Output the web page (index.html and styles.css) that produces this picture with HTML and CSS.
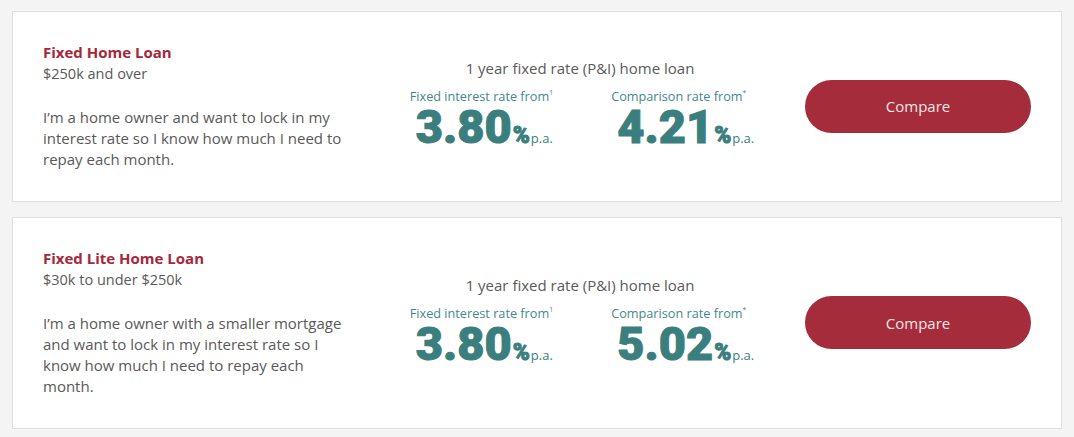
FILE: index.html
```html
<!DOCTYPE html>
<html lang="en">
<head>
  <meta charset="UTF-8" />
  <meta name="viewport" content="width=device-width, initial-scale=1" />
  <title>Fixed Home Loans</title>
  <link rel="stylesheet" href="styles.css">
</head>
<body>
  <main class="loan-list">
    <section class="loan-card">
      <div class="loan-info">
        <h2 class="loan-title">Fixed Home Loan</h2>
        <p class="loan-range">$250k and over</p>
        <p class="loan-desc">I’m a home owner and want to lock in my interest rate so I know how much I need to repay each month.</p>
      </div>

      <div class="loan-rates">
        <p class="rates-heading">1 year fixed rate (P&amp;I) home loan</p>
        <div class="rates-row">
          <div class="rate">
            <span class="rate-label">Fixed interest rate from<sup>1</sup></span>
            <span class="rate-value">3.80<span class="pct">%</span><span class="pa">p.a.</span></span>
          </div>
          <div class="rate">
            <span class="rate-label">Comparison rate from<sup>*</sup></span>
            <span class="rate-value">4.21<span class="pct">%</span><span class="pa">p.a.</span></span>
          </div>
        </div>
      </div>

      <a href="#" class="compare-btn">Compare</a>
    </section>

    <section class="loan-card">
      <div class="loan-info">
        <h2 class="loan-title">Fixed Lite Home Loan</h2>
        <p class="loan-range">$30k to under $250k</p>
        <p class="loan-desc">I’m a home owner with a smaller mortgage and want to lock in my interest rate so I know how much I need to repay each month.</p>
      </div>

      <div class="loan-rates">
        <p class="rates-heading">1 year fixed rate (P&amp;I) home loan</p>
        <div class="rates-row">
          <div class="rate">
            <span class="rate-label">Fixed interest rate from<sup>1</sup></span>
            <span class="rate-value">3.80<span class="pct">%</span><span class="pa">p.a.</span></span>
          </div>
          <div class="rate">
            <span class="rate-label">Comparison rate from<sup>*</sup></span>
            <span class="rate-value">5.02<span class="pct">%</span><span class="pa">p.a.</span></span>
          </div>
        </div>
      </div>

      <a href="#" class="compare-btn">Compare</a>
    </section>
  </main>
</body>
</html>
```

FILE: styles.css
```css
/* Reset */
* {
  box-sizing: border-box;
  margin: 0;
  padding: 0;
}

body {
  font-family: 'Open Sans', 'Liberation Sans', sans-serif;
  background: #f4f4f4;
  color: #595959;
  padding: 11px 12px 0 12px;
}

.loan-list {
  display: flex;
  flex-direction: column;
  gap: 15px;
}

/* Card */
.loan-card {
  background: white;
  border: 1px solid #dedede;
  padding: 30px 30px 31px 30px;
  display: flex;
  align-items: center;
}

.loan-info {
  width: 312px;
  flex: none;
  align-self: flex-start;
}

.loan-title {
  font-size: 15px;
  font-weight: 700;
  line-height: 21px;
  color: #a6273b;
}

.loan-range {
  font-size: 14.5px;
  line-height: 21px;
}

.loan-desc {
  max-width: 305px;
  font-size: 15px;
  line-height: 21px;
  margin-top: 23px;
}

/* Rates */
.loan-rates {
  flex: 1;
  display: flex;
  flex-direction: column;
  align-items: center;
  padding-top: 5px;
}

.rates-heading {
  font-size: 15px;
  line-height: 20px;
  color: #5a5a5a;
}

.rates-row {
  display: flex;
  gap: 58px;
  margin-top: 7px;
  padding-left: 4px;
}

.rate {
  display: flex;
  flex-direction: column;
  gap: 2px;
}

.rate-label {
  font-size: 12.7px;
  line-height: 16px;
  color: #3f8a88;
}

.rate-label sup {
  font-size: 7px;
  vertical-align: 6px;
}

.rate-value {
  font-family: Roboto, 'Liberation Sans', sans-serif;
  font-weight: 900;
  font-size: 47px;
  line-height: 42px;
  color: #3a7f7e;
  -webkit-text-stroke: 1px #3a7f7e;
  padding-left: 6px;
}

.pct {
  font-size: 23px;
  margin-left: 1px;
}

.pa {
  font-family: 'Open Sans', sans-serif;
  font-weight: 400;
  font-size: 13px;
  -webkit-text-stroke: 0;
  margin-left: 1px;
}

/* Button */
.compare-btn {
  flex: none;
  width: 226px;
  height: 53px;
  border-radius: 27px;
  background: #a52d3b;
  color: #f3e4e6;
  font-size: 15px;
  text-decoration: none;
  display: flex;
  align-items: center;
  justify-content: center;
}
```
